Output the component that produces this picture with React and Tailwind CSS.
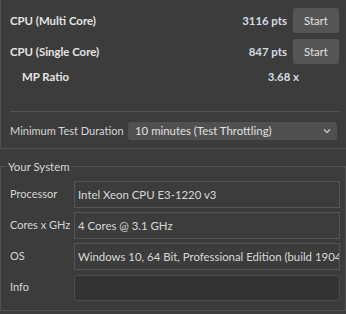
export default function App() {
  const fields = [
    { label: 'Processor', value: 'Intel Xeon CPU E3-1220 v3' },
    { label: 'Cores x GHz', value: '4 Cores @ 3.1 GHz' },
    { label: 'OS', value: 'Windows 10, 64 Bit, Professional Edition (build 19045)' },
  ]

  return (
    <div className="w-[346px] h-[314px] overflow-hidden whitespace-nowrap bg-[#3c3c3c] text-[11.4px] text-[#d6d6d6] font-['Lato',sans-serif]">
      {/* Benchmark results */}
      <div className="h-[149px] border-b border-l border-[#525252] pt-[8px] pb-[8px] flex flex-col">
        <div className="flex h-[25px] items-center">
          <span className="flex-1 pl-[9px] font-bold text-[#e4e4e4]">CPU (Multi Core)</span>
          <span className="font-bold text-[#d5dbe3]">3116 pts</span>
          <button className="ml-[6px] mr-[7px] h-[25px] w-[46px] rounded-[3px] bg-[#555555] text-[#e0e0e0]">Start</button>
        </div>
        <div className="mt-[6px] flex h-[25px] items-center">
          <span className="flex-1 pl-[9px] font-bold text-[#e4e4e4]">CPU (Single Core)</span>
          <span className="font-bold text-[#d5dbe3]">847 pts</span>
          <button className="ml-[6px] mr-[7px] h-[25px] w-[46px] rounded-[3px] bg-[#555555] text-[#e0e0e0]">Start</button>
        </div>
        <div className="mt-[5px] flex h-[16px] items-center">
          <span className="flex-1 pl-[21px] font-bold text-[#e4e4e4]">MP Ratio</span>
          <span className="mr-[47px] font-bold text-[#d5dbe3]">3.68 x</span>
        </div>
        <div className="mt-[26px] ml-[9px] mr-[6px] border-t border-[#525252]" />
        <div className="mt-[10px] flex h-[18px] items-center">
          <span className="flex-1 pl-[9px] text-[11px]">Minimum Test Duration</span>
          <div className="mr-[9px] flex h-[18px] w-[209px] items-center rounded-[3px] bg-[#505050] pl-[7px] pr-[6px] text-[#e0e0e0]">
            <span className="flex-1">10 minutes (Test Throttling)</span>
            <svg width="8" height="6" viewBox="0 0 8 6" fill="none" stroke="#d8d8d8" strokeWidth="1.1">
              <path d="M1 1.5 L4 4.5 L7 1.5" />
            </svg>
          </div>
        </div>
      </div>

      {/* Your System group */}
      <div className="mt-[17px] border border-[#525252] pl-[9px] pr-[5px] pb-[9px]">
        <div className="-mt-[8px] -ml-[3px] w-fit bg-[#3c3c3c] px-[1px] leading-[16px]">Your System</div>
        <div className="mt-[6px] grid grid-cols-[64px_1fr] gap-y-[4px]">
          {fields.map((f) => (
            <div key={f.label} className="contents">
              <span className="flex h-[27px] items-center text-[11px]">{f.label}</span>
              <div className="flex h-[27px] items-center overflow-hidden border border-[#555555] pl-[3px] text-[#d8d8d8]">
                {f.value}
              </div>
            </div>
          ))}
          <span className="flex h-[27px] items-center text-[11px]">Info</span>
          <div className="h-[26px] mt-px rounded-[3px] border border-[#4c4c4c] bg-[#333333]" />
        </div>
      </div>
    </div>
  )
}
